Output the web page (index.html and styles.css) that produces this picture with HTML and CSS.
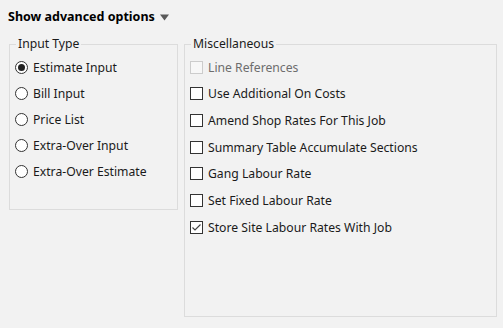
FILE: index.html
```html
<!DOCTYPE html>
<html>
<head>
<meta charset="utf-8">
<link rel="stylesheet" href="styles.css">
</head>
<body>
<div class="page">
  <div class="header">
    <span class="title">Show advanced options</span>
    <svg class="caret" width="9" height="7" viewBox="0 0 9 7"><path d="M0 0.5 H9 L4.5 6.5 Z" fill="#595959"/></svg>
  </div>
  <div class="groups">
    <fieldset class="group group-input">
      <legend>Input Type</legend>
      <div class="opt"><span class="radio checked"></span><span>Estimate Input</span></div>
      <div class="opt"><span class="radio"></span><span>Bill Input</span></div>
      <div class="opt"><span class="radio"></span><span>Price List</span></div>
      <div class="opt"><span class="radio"></span><span>Extra-Over Input</span></div>
      <div class="opt"><span class="radio"></span><span>Extra-Over Estimate</span></div>
    </fieldset>
    <fieldset class="group group-misc">
      <legend>Miscellaneous</legend>
      <div class="opt disabled"><span class="check"></span><span>Line References</span></div>
      <div class="opt"><span class="check"></span><span>Use Additional On Costs</span></div>
      <div class="opt"><span class="check"></span><span>Amend Shop Rates For This Job</span></div>
      <div class="opt"><span class="check"></span><span>Summary Table Accumulate Sections</span></div>
      <div class="opt"><span class="check"></span><span>Gang Labour Rate</span></div>
      <div class="opt"><span class="check"></span><span>Set Fixed Labour Rate</span></div>
      <div class="opt"><span class="check checked"><svg width="11" height="11" viewBox="0 0 11 11"><path d="M1.5 5.5 L4 8 L9.5 2.5" fill="none" stroke="#444" stroke-width="1.2"/></svg></span><span>Store Site Labour Rates With Job</span></div>
    </fieldset>
  </div>
</div>
</body>
</html>
```

FILE: styles.css
```css
html, body {
  margin: 0;
  padding: 0;
  background: #f2f2f2;
}
body {
  width: 503px;
  height: 328px;
  overflow: hidden;
  font-family: "Noto Sans", "Open Sans", sans-serif;
  font-size: 12.2px;
  color: #1a1a1a;
}
.page {
  padding: 6px 0 0 8px;
}
.header {
  display: flex;
  align-items: center;
  gap: 5px;
  height: 20px;
}
.title {
  font-weight: bold;
  font-size: 12.5px;
  color: #000;
}
.caret {
  margin-top: 2px;
}
.groups {
  display: flex;
  align-items: flex-start;
  gap: 6px;
  margin-top: 10px;
  margin-left: 1px;
}
.group {
  margin: 0;
  border: 1px solid #dcdcdc;
  padding: 2px 0 0 5px;
  box-sizing: border-box;
}
.group legend {
  padding: 0 2px;
  margin-left: 1px;
  line-height: 16px;
  color: #1a1a1a;
}
.group-input {
  width: 169px;
  height: 174px;
}
.group-misc {
  width: 313px;
  height: 281px;
}
.opt {
  display: flex;
  align-items: center;
  gap: 5px;
  height: 26px;
  white-space: nowrap;
}
.group-misc .opt {
  height: 26.67px;
}
.radio {
  width: 13px;
  height: 13px;
  box-sizing: border-box;
  border: 1px solid #333;
  border-radius: 50%;
  background: #fff;
  display: flex;
  align-items: center;
  justify-content: center;
  flex: none;
}
.radio.checked::after {
  content: "";
  width: 7px;
  height: 7px;
  border-radius: 50%;
  background: #222;
}
.check {
  width: 13px;
  height: 13px;
  box-sizing: border-box;
  border: 1px solid #333;
  background: #fff;
  display: flex;
  align-items: center;
  justify-content: center;
  flex: none;
}
.opt.disabled {
  color: #6d6d6d;
}
.opt.disabled .check {
  border-color: #cccccc;
  background: #f7f7f7;
}
```
